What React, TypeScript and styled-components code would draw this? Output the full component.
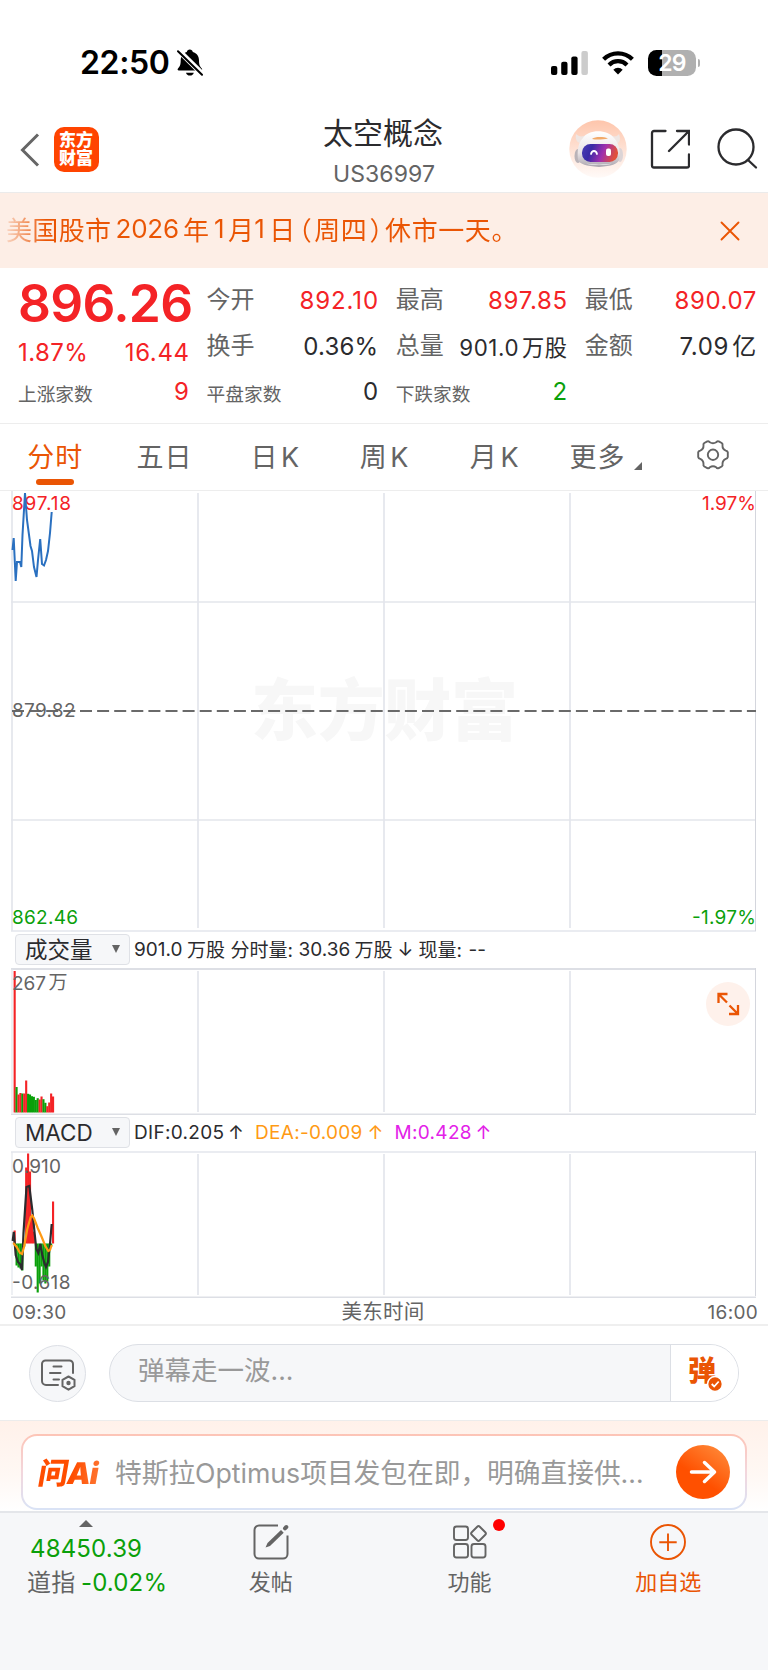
import React from "react";
import styled, { createGlobalStyle, css } from "styled-components";

const RED = "#f42326";
const GREEN = "#0aa00a";
const ORANGE = "#ea5504";
const INK = "#2b2b2e";
const GRAY = "#646464";
const GRID = "#e3e6ec";

const GlobalStyle = createGlobalStyle`
  * { box-sizing: border-box; }
  body {
    margin: 0;
    background: #fff;
    color: ${INK};
    font-family: Inter, "Noto Sans CJK SC", sans-serif;
  }
  svg { display: block; }
`;

const Screen = styled.main`
  width: 768px;
  height: 1670px;
  display: flex;
  flex-direction: column;
  overflow: hidden;
  background: #fff;
  white-space: nowrap;
`;

/* ---------- status bar ---------- */

const StatusBar = styled.header`
  height: 106px;
  flex: none;
  display: flex;
  justify-content: space-between;
  padding: 42px 72px 0 80px;
`;

const Clock = styled.div`
  display: flex;
  align-items: center;
  gap: 7px;
  height: 41px;
  color: #000;
  font-size: 32px;
  font-weight: 600;
  letter-spacing: -0.35px;
`;

const StatusIcons = styled.div`
  display: flex;
  align-items: center;
  height: 41px;
  gap: 14px;
`;

const Battery = styled.div`
  position: relative;
  width: 48px;
  height: 26px;
  border-radius: 8.5px;
  background: linear-gradient(90deg, #000 0 14px, #b0b0b0 14px);
  color: #fff;
  font-size: 23px;
  line-height: 27px;
  font-weight: 600;
  letter-spacing: -0.7px;
  text-align: center;
  &::after {
    content: "";
    position: absolute;
    right: -4px;
    top: 9px;
    width: 2.5px;
    height: 8px;
    border-radius: 0 3px 3px 0;
    background: #b0b0b0;
  }
`;

/* ---------- title bar ---------- */

const TitleBar = styled.div`
  height: 87px;
  flex: none;
  display: grid;
  grid-template-columns: 1fr 160px 1fr;
  border-bottom: 1px solid #ebebeb;
`;

const TitleLeft = styled.div`
  display: flex;
  align-items: center;
  gap: 14px;
  padding: 1px 0 0 19.5px;
`;

const AppLogo = styled.div`
  width: 45px;
  height: 45px;
  margin-top: -1px;
  padding-top: 4px;
  border-radius: 10px;
  background: #ff4400;
  color: #fff;
  font-size: 17px;
  line-height: 18.5px;
  font-weight: 900;
  text-align: center;
`;

const TitleCenter = styled.div`
  text-align: center;
`;

const Title = styled.h1`
  margin: 6px 0 0 -2px;
  height: 43px;
  font-size: 30px;
  line-height: 43px;
  font-weight: 400;
`;

const Code = styled.div`
  margin-top: 3px;
  font-size: 23px;
  line-height: 32px;
  letter-spacing: 0.1px;
  color: ${GRAY};
`;

const TitleRight = styled.div`
  display: flex;
  justify-content: flex-end;
  align-items: center;
  padding: 0 10px 0 0;
`;

/* ---------- notice ---------- */

const Notice = styled.div`
  height: 75px;
  flex: none;
  display: flex;
  align-items: center;
  justify-content: space-between;
  padding: 0 28.5px 0 6px;
  background: #fdeee6;
  color: ${ORANGE};
`;

const NoticeText = styled.div`
  display: flex;
  align-items: center;
  height: 40px;
  margin-top: -4px;
  font-size: 26px;
  letter-spacing: 0.35px;
  background: linear-gradient(90deg, rgba(234, 85, 4, 0.15), ${ORANGE} 40px);
  background-clip: text;
  -webkit-background-clip: text;
  color: transparent;
`;

const Seg = styled.span<{ $w: number; $c?: string; $ls?: number; $half?: boolean }>`
  flex: 0 0 ${(p) => p.$w}px;
  ${(p) => p.$c && css`color: ${p.$c};`}
  ${(p) => p.$ls !== undefined && css`letter-spacing: ${p.$ls}px;`}
  ${(p) => p.$half && css`
    font-feature-settings: "halt";
    text-align: center;
  `}
`;

/* ---------- quote ---------- */

const Quote = styled.section`
  height: 155px;
  flex: none;
  display: flex;
  gap: 17.6px;
  padding: 0 12px 0 18px;
`;

const QuoteCol = styled.div<{ $w: number; $top: number }>`
  flex: 0 0 ${(p) => p.$w}px;
  min-width: 0;
  padding-top: ${(p) => p.$top}px;
`;

const Row = styled.div<{ $h: number }>`
  height: ${(p) => p.$h}px;
  display: flex;
  align-items: center;
  justify-content: space-between;
`;

const Price = styled.div`
  height: 70px;
  font-size: 51.5px;
  line-height: 70px;
  font-weight: 600;
  letter-spacing: -0.7px;
  color: ${RED};
`;

const Label = styled.span<{ $small?: boolean }>`
  color: ${GRAY};
  font-size: ${(p) => (p.$small ? 18.7 : 24)}px;
  margin-top: ${(p) => (p.$small ? 2 : -5)}px;
`;

const Value = styled.span<{ $c?: string; $size?: number; $ls?: number; $up?: number }>`
  color: ${(p) => p.$c || INK};
  font-size: ${(p) => p.$size || 24}px;
  letter-spacing: ${(p) => p.$ls ?? 0.6}px;
  margin-right: -${(p) => p.$ls ?? 0.6}px;
  margin-top: -${(p) => p.$up || 0}px;
  word-spacing: -4px;
`;

/* ---------- tabs ---------- */

const Tabs = styled.nav`
  height: 68px;
  flex: none;
  display: grid;
  grid-template-columns: repeat(7, 1fr);
  border-top: 1px solid #ededed;
  border-bottom: 1px solid #ededed;
`;

const Tab = styled.div<{ $active?: boolean; $left?: number }>`
  position: relative;
  display: flex;
  align-items: center;
  justify-content: center;
  padding: 0 0 4px ${(p) => p.$left || 0}px;
  font-size: 27px;
  letter-spacing: 1px;
  word-spacing: -6px;
  color: ${(p) => (p.$active ? ORANGE : GRAY)};
  ${(p) => p.$active && css`
    &::after {
      content: "";
      position: absolute;
      left: 36px;
      bottom: 5px;
      width: 38px;
      height: 6px;
      border-radius: 3px;
      background: ${ORANGE};
    }
  `}
`;

const Corner = styled.i`
  align-self: flex-end;
  margin: 0 0 16.5px 9px;
  border-left: 8px solid transparent;
  border-bottom: 8px solid ${GRAY};
`;

/* ---------- indicator bars ---------- */

const Indicator = styled.div<{ $h: number }>`
  height: ${(p) => p.$h}px;
  flex: none;
  display: flex;
  align-items: center;
  padding: 0 0 1px 15px;
  font-size: 19px;
`;

const Cjk = styled.span<{ $w: number; $up?: number }>`
  flex: 0 0 ${(p) => p.$w}px;
  margin-top: -${(p) => p.$up ?? 3}px;
`;

const Picker = styled.div`
  flex: 0 0 115px;
  height: 31px;
  margin-right: 4px;
  padding: 0 9.5px 0 9px;
  display: flex;
  align-items: center;
  justify-content: space-between;
  border: 1px solid #dfe1e6;
  border-radius: 4px;
  background: #f6f7f9;
  font-size: 22.5px;
`;

const Caret = styled.i`
  margin-top: -1px;
  border: 4.5px solid transparent;
  border-top: 8px solid ${GRAY};
  border-bottom: 0;
`;

const ChartBox = styled.div`
  position: relative;
  flex: none;
`;

const Expand = styled.button`
  position: absolute;
  right: 18px;
  top: 14px;
  width: 44px;
  height: 44px;
  padding: 0;
  border: 0;
  border-radius: 50%;
  background: #fef1eb;
`;

const TimeAxis = styled.div`
  height: 28px;
  flex: none;
  display: grid;
  grid-template-columns: 1fr auto 1fr;
  align-items: center;
  padding: 3px 10px 0 12px;
  border-bottom: 2px solid #efefef;
  color: ${GRAY};
  font-size: 19px;
  line-height: 24px;
  letter-spacing: 0.3px;
  & > :nth-child(2) { font-size: 20.5px; margin: -2px 2px 0 -2px; }
  & > :last-child { text-align: right; }
`;

/* ---------- comment bar ---------- */

const CommentBar = styled.div`
  height: 94px;
  flex: none;
  display: flex;
  align-items: center;
  gap: 23px;
  padding: 0 29px;
`;

const RoundButton = styled.div`
  width: 57px;
  height: 57px;
  border: 1px solid #dcdfe5;
  border-radius: 50%;
  background: #f6f7f9;
`;

const CommentInput = styled.div`
  flex: 1;
  height: 58px;
  display: flex;
  overflow: hidden;
  border: 1px solid #dcdfe5;
  border-radius: 29px;
  background: #f6f7f9;
`;

const Placeholder = styled.div`
  flex: 1;
  padding-left: 28px;
  font-size: 26.5px;
  line-height: 50px;
  color: #999;
`;

const DanToggle = styled.div`
  position: relative;
  width: 68px;
  padding: 0 0 0 17px;
  border-left: 1px solid #dcdfe5;
  background: #fff;
  color: ${ORANGE};
  font-size: 28px;
  line-height: 53px;
  font-weight: 900;
  & > svg { position: absolute; left: 36px; top: 31px; }
`;

/* ---------- AI bar ---------- */

const AiBar = styled.div`
  height: 91px;
  flex: none;
  padding: 13px 21px 0;
  border-top: 1px solid #ececec;
  background: linear-gradient(#fff1ea, #fff8f4 60%, #fff);
`;

const AiCard = styled.div`
  height: 76px;
  display: flex;
  align-items: center;
  padding: 0 15px 0 15px;
  border: 2px solid transparent;
  border-radius: 16px;
  background:
    linear-gradient(#fff, #fff) padding-box,
    linear-gradient(#fdc4b6, #f3d6dc 50%, #d9e3f6) border-box;
`;

const AiLogo = styled.div`
  width: 77px;
  margin-top: -3px;
  padding-left: 1px;
  font-size: 30px;
  font-weight: 900;
  letter-spacing: -1.1px;
  transform: skewX(-10deg);
  background: linear-gradient(90deg, #ff4d00 45%, #ff8a4a);
  background-clip: text;
  -webkit-background-clip: text;
  color: transparent;
`;

const AiText = styled.div`
  flex: 1;
  margin-top: -2px;
  color: #999;
  font-size: 26.75px;
  letter-spacing: -0.05px;
`;

const Go = styled.div`
  width: 54px;
  height: 54px;
  border-radius: 50%;
  background: linear-gradient(35deg, #ff5000 40%, #ff9140);
`;

/* ---------- bottom navigation ---------- */

const BottomNav = styled.footer`
  flex: 1;
  display: flex;
  border-top: 2px solid #e4e6ea;
  background: #f6f7f9;
`;

const IndexCell = styled.div`
  width: 172px;
  padding: 7px 0 0 27px;
  font-size: 24px;
`;

const UpMark = styled.i`
  display: block;
  width: 0;
  margin-left: 52px;
  border: 7px solid transparent;
  border-bottom: 7px solid ${GRAY};
  border-top: 0;
`;

const IndexLine = styled.div<{ $h: number; $c: string; $left?: number }>`
  display: flex;
  align-items: center;
  height: ${(p) => p.$h}px;
  padding-left: ${(p) => p.$left || 0}px;
  color: ${(p) => p.$c};
  letter-spacing: 0.15px;
`;

const NavItem = styled.div<{ $active?: boolean }>`
  position: relative;
  flex: 1;
  display: flex;
  flex-direction: column;
  align-items: center;
  padding: 10.5px 1px 0 0;
  font-size: 22px;
  line-height: 32px;
  color: ${(p) => (p.$active ? ORANGE : GRAY)};
  & > svg { margin-bottom: 6px; }
`;

const Dot = styled.i`
  position: absolute;
  left: 122px;
  top: 6px;
  width: 12px;
  height: 12px;
  border-radius: 50%;
  background: #f00;
`;

/* ---------- charts ---------- */

const COLS = [198, 384, 570];

const Txt = (p: { x: number; y: number; w: number; c: string; end?: boolean; children: string }) => (
  <text
    x={p.x}
    y={p.y}
    fill={p.c}
    fontSize={19}
    textAnchor={p.end ? "end" : "start"}
    textLength={p.w}
    lengthAdjust="spacing"
  >
    {p.children}
  </text>
);

const pts = (a: number[][]) => a.map((p) => p.join(",")).join(" ");

const priceLine = [
  [12.5, 59], [13.7, 47], [15.7, 90], [17, 71], [20, 71], [21.3, 76], [22.5, 44], [25, 2], [27, 29],
  [30.5, 55], [32, 60], [34, 76], [36.5, 86], [38, 69], [40.2, 48], [42, 73], [44, 74.5], [46, 69],
  [48, 60], [50, 42], [51.7, 21],
];

const PriceChart = () => (
  <svg width="768" height="441" viewBox="0 0 768 441">
    <text x="251" y="244" fontSize="67" fontWeight="900" fill="#f7f7f7" textLength="267" lengthAdjust="spacing">
      东方财富
    </text>
    <g stroke={GRID} strokeWidth="1.7">
      <path d="M12 0V440M11 111H756M11 329H756" />
      {COLS.map((x) => <path key={x} d={`M${x} 2V437`} />)}
      <path d="M11 440H756" strokeWidth="1.500" />
    </g>
    <path d="M755.500 0V440" stroke="#d4d6dd" />
    <path d="M80 220H756" stroke="#6a6a6a" strokeWidth="2" strokeDasharray="12 5.1" />
    <path d="M12 220H76" stroke="#6a6a6a" strokeWidth="2" strokeDasharray="12 5.1" />
    <Txt x={12} y={19} w={59} c={RED}>897.18</Txt>
    <Txt x={756} y={19} w={54} c={RED} end>1.97%</Txt>
    <Txt x={12} y={226} w={63.500} c={GRAY}>879.82</Txt>
    <Txt x={12} y={432.500} w={66} c={GREEN}>862.46</Txt>
    <Txt x={756} y={432.500} w={64} c={GREEN} end>-1.97%</Txt>
    <polyline points={pts(priceLine)} fill="none" stroke="#2a70c0" strokeWidth="2" />
  </svg>
);

const BAR = 1.92;

/* [height, isUp] for each minute */
const volume: [number, boolean][] = [
  [141.5, true], [25.5, false], [18, true], [19.5, true], [19, false], [19, true], [32, true],
  [18.7, false], [18, false], [16.3, false], [15.7, false], [12.5, false], [14.3, false], [13, true],
  [16, true], [13.3, false], [9.7, false], [6.3, true], [10, true], [19, true], [16, true],
];

const VolumeChart = () => (
  <svg width="768" height="147" viewBox="0 0 768 147">
    <path d="M11 1H756M11 146.500H756" stroke="#dddfe5" strokeWidth="1.8" />
    <path d="M12 1V145" stroke={GRID} strokeWidth="1.2" />
    {COLS.map((x) => <path key={x} d={`M${x} 3V144`} stroke={GRID} strokeWidth="1.7" />)}
    <path d="M755.500 0V145" stroke="#d4d6dd" />
    {volume.map(([h, up], i) => (
      <rect key={i} x={13.6 + i * BAR} y={144.5 - h} width={BAR + 0.2} height={h} fill={up ? RED : GREEN} />
    ))}
    <Txt x={12} y={21.500} w={34} c={GRAY}>267</Txt>
    <Txt x={48.500} y={21} w={19} c={GRAY}>万</Txt>
  </svg>
);

const macd = [
  13, -22, -24, -25, -27, -3, 76, 90, 72, 28, 12, -23, -49, -40, -23, -37, -40, -38, -23, -3, 42,
];

const dif = [
  [12.7, 90], [13.8, 81], [15.7, 104], [18, 111], [20, 113], [22, 119], [23.5, 82], [26.5, 36],
  [29.3, 35], [32.3, 59], [34.7, 83], [36.3, 98], [38.3, 102], [40.3, 93], [42.3, 104], [44.3, 112],
  [46, 116], [48, 111], [50, 93], [51.7, 73],
];

const dea = [
  [13.3, 92], [16.7, 96], [20, 102], [22, 103], [24, 96], [27.3, 78], [30.7, 66], [32.3, 64.5],
  [34.3, 68], [37.7, 77], [41.7, 86], [45.3, 95], [48.3, 100], [50, 99], [51.7, 94],
];

const MacdChart = () => (
  <svg width="768" height="147" viewBox="0 0 768 147">
    <path d="M11 1H756" stroke={GRID} strokeWidth="1.500" />
    <path d="M11 147H756" stroke="#dddfe5" strokeWidth="3" />
    <path d="M12 1V144" stroke={GRID} strokeWidth="1.2" />
    {COLS.map((x) => <path key={x} d={`M${x} 3V144`} stroke={GRID} strokeWidth="1.7" />)}
    <path d="M755.500 0V145" stroke="#d4d6dd" />
    {macd.map((v, i) => (
      <rect
        key={i}
        x={13.6 + i * BAR}
        y={v > 0 ? 92.5 - v : 92.5}
        width={BAR + 0.2}
        height={Math.abs(v)}
        fill={v > 0 ? RED : GREEN}
      />
    ))}
    <Txt x={12} y={21.500} w={49} c={GRAY}>0.910</Txt>
    <Txt x={12} y={138} w={58.500} c={GRAY}>-0.618</Txt>
    <polyline points={pts(dif)} fill="none" stroke="#2b2b2e" strokeWidth="2.2" />
    <polyline points={pts(dea)} fill="none" stroke="#ff9a14" strokeWidth="2.2" />
  </svg>
);

/* ---------- icons ---------- */

const BellOff = () => (
  <svg width="26" height="28" viewBox="0 0 26 28">
    <path d="M12.8 .5c1.6 0 2.8 1 3 2.4 4 1.2 6.200 4.200 6.200 8.600 0 4.500 1 6 2.800 8 .7.8.4 2-.8 2H1.800c-1.200 0-1.600-1.200-.8-2 1.800-2 2.700-3.500 2.700-8 0-4.400 2.200-7.400 6.100-8.600.2-1.400 1.400-2.400 3-2.400z" fill="#000" />
    <path d="M9 23.800h7.800a4 3.600 0 0 1-7.800 0z" fill="#000" />
    <path d="M1.200 1.200L26 25.500" stroke="#fff" strokeWidth="5.500" />
    <path d="M1 2.200L25 25.800" stroke="#000" strokeWidth="2" strokeLinecap="round" />
  </svg>
);

const Signal = () => (
  <svg width="37" height="24" viewBox="0 0 37 24">
    <rect x="0" y="15" width="6.300" height="9" rx="2" />
    <rect x="10.200" y="10.800" width="6.300" height="13.200" rx="2" />
    <rect x="20.300" y="5.600" width="6.300" height="18.400" rx="2" />
    <rect x="30.400" y="0" width="6.500" height="24" rx="2" fill="#ccc" />
  </svg>
);

const Wifi = () => (
  <svg width="32" height="24" viewBox="0 0 32 24" fill="none" stroke="#000" strokeWidth="4.200">
    <path d="M1.600 8.300a20.500 20.500 0 0 1 28.800 0" />
    <path d="M7 13.900a12.800 12.800 0 0 1 18 0" />
    <path d="M16 23.500l-4.700-4.700a6.700 6.700 0 0 1 9.400 0z" fill="#000" stroke="none" />
  </svg>
);

const Back = () => (
  <svg width="20" height="34" viewBox="0 0 20 34" fill="none" stroke="#666" strokeWidth="3">
    <path d="M18 1.500L2.500 17 18 32.500" />
  </svg>
);

const Robot = () => (
  <svg width="58" height="58" viewBox="0 0 58 58">
    <defs>
      <linearGradient id="halo" x1="0" y1="0" x2="0" y2="1">
        <stop offset="0" stopColor="#fec5ab" />
        <stop offset=".55" stopColor="#fee4d8" />
        <stop offset="1" stopColor="#fffaf8" />
      </linearGradient>
      <linearGradient id="visor" x1="0" y1="0" x2="1" y2=".2">
        <stop offset="0" stopColor="#4a3fb4" />
        <stop offset=".3" stopColor="#3a2ba6" />
        <stop offset=".65" stopColor="#a02fae" />
        <stop offset="1" stopColor="#e0503c" />
      </linearGradient>
      <linearGradient id="shell" x1="0" y1="0" x2="0" y2="1">
        <stop offset="0" stopColor="#fff" />
        <stop offset=".6" stopColor="#e9e4e6" />
        <stop offset="1" stopColor="#aaa5ae" />
      </linearGradient>
    </defs>
    <circle cx="29" cy="29" r="28.700" fill="url(#halo)" />
    <ellipse cx="9" cy="36" rx="3.500" ry="7" fill="#b9b3b8" />
    <ellipse cx="51" cy="35" rx="3" ry="7" fill="#dcd4d6" />
    <path d="M7 14c-1 6 1 9 7 10l4-9c-5 2-8 2-11-1zM50 14c2 6 1 9-4 10l-6-9c5 2 8 2 10-1z" fill="#efe6e3" />
    <path d="M14 18c5-9 25-9 31 0 5 5 7 14 5 22-2 4-7 6-20 7-13-1-19-3-21-7-1-9 0-17 5-22z" fill="url(#shell)" />
    <path d="M23 19c3-2.500 11-2.500 16-.5-5 1-11 1.500-16 .5z" fill="#f2a968" />
    <rect x="13" y="24" width="36" height="18" rx="8.500" fill="url(#visor)" />
    <path d="M22 34c1-4 5-4 6 0" fill="none" stroke="#fff" strokeWidth="1.800" strokeLinecap="round" />
    <rect x="37" y="28.500" width="5" height="7.500" rx="2" fill="#fff" />
    <path d="M17 43.500c8 1.500 18 1.500 26 0-6 2-20 2-26 0z" fill="#fff" />
  </svg>
);

const ShareIcon = styled.svg`
  margin-left: 23px;
`;

const SearchIcon = styled.svg`
  margin-left: 26px;
`;

const Share = () => (
  <ShareIcon width="40" height="40" viewBox="0 0 40 40" fill="none" stroke="#2b2b2e" strokeWidth="2.300" strokeLinecap="round">
    <path d="M15.500 2H4a2 2 0 0 0-2 2v32.500a2 2 0 0 0 2 2h33a2 2 0 0 0 2-2V25.500" />
    <path d="M27 2h12v13.500M38.500 2.500L19 22" />
  </ShareIcon>
);

const Search = () => (
  <SearchIcon width="42" height="42" viewBox="0 0 42 42" fill="none" stroke="#2b2b2e" strokeWidth="2.300" strokeLinecap="round">
    <circle cx="20" cy="19" r="17.500" />
    <path d="M32 32l8 7.500" />
  </SearchIcon>
);

const Close = () => (
  <svg width="20" height="20" viewBox="0 0 20 20" fill="none" stroke={ORANGE} strokeWidth="1.900" strokeLinecap="round">
    <path d="M1.500 1.500l17 17M18.500 1.500l-17 17" />
  </svg>
);

const Gear = () => (
  <svg width="32" height="32" viewBox="0 0 32 32" fill="none" stroke={GRAY} strokeWidth="1.900" strokeLinejoin="round">
    <path d="M10.300 2.300Q12 1.800 12.800 3.200Q16 5.200 19.200 3.200Q20 1.800 21.700 2.300L24.700 4Q26 5 25.500 6.500Q25.400 10.300 28.800 11.600Q30.500 12 30.800 13.300V18Q30.500 19.400 28.800 19.800Q25.400 21.300 25.500 25Q26 26.500 24.700 27.500L21.700 29.200Q20 29.700 19.200 28.300Q16 26.300 12.800 28.300Q12 29.700 10.300 29.200L7.300 27.500Q6 26.500 6.500 25Q6.600 21.300 3.200 19.800Q1.500 19.400 1.200 18V13.300Q1.500 12 3.200 11.600Q6.600 10.300 6.500 6.500Q6 5 7.300 4Z" />
    <circle cx="16" cy="15.750" r="5.200" />
  </svg>
);

const ExpandIcon = () => (
  <svg width="44" height="44" viewBox="0 0 44 44" fill="none" stroke={ORANGE} strokeWidth="2.300">
    <path d="M12.500 21v-9h9M13 12.500l8 8M32 23v9h-9M31.500 31.500l-8-8" />
  </svg>
);

const PostSettings = () => (
  <svg width="55" height="55" viewBox="0 0 55 55" fill="none" stroke={GRAY} strokeWidth="2" strokeLinecap="round">
    <path d="M43 27V18a3.500 3.500 0 0 0-3.500-3.500h-24A3.500 3.500 0 0 0 12 18v17a4 4 0 0 0 4 4h12" />
    <path d="M23.500 20.500h8M20 27h10.500M23.500 33.500h5.500" />
    <path d="M38.500 30.500l6 3.300v6.400l-6 3.500-6-3.500v-6.400z" strokeLinejoin="round" />
    <circle cx="38.500" cy="37" r="1.200" fill={GRAY} />
  </svg>
);

const CheckBadge = () => (
  <svg width="16" height="16" viewBox="0 0 16 16" overflow="visible">
    <circle cx="8" cy="8" r="7.400" fill={ORANGE} stroke="#fff" strokeWidth="1.500" />
    <path d="M4.700 8l2.500 2.500 4.500-5" fill="none" stroke="#fff" strokeWidth="1.800" />
  </svg>
);

const GoArrow = () => (
  <svg width="54" height="54" viewBox="0 0 54 54" fill="none" stroke="#fff" strokeWidth="3.500" strokeLinecap="round" strokeLinejoin="round">
    <path d="M15.500 27h23M28.500 17.500L38.500 27l-10 9.500" />
  </svg>
);

const Compose = () => (
  <svg width="36" height="36" viewBox="0 0 36 36" fill="none" stroke={GRAY} strokeWidth="2">
    <path d="M25 1.500H6A4.500 4.500 0 0 0 1.500 6v24A4.500 4.500 0 0 0 6 34.500h24a4.500 4.500 0 0 0 4.500-4.500V11.500" />
    <path d="M12.500 23.500l2-4.500L28 6l2.700 2.700L17 22z" fill={GRAY} stroke="none" />
    <path d="M32 4.300l1.300-1.300" strokeWidth="4" strokeLinecap="round" />
  </svg>
);

const Apps = () => (
  <svg width="36" height="36" viewBox="0 0 36 36" fill="none" stroke={GRAY} strokeWidth="1.900">
    <rect x="2" y="2.500" width="14" height="13.500" rx="2.500" />
    <rect x="2" y="20" width="14" height="13.500" rx="2.500" />
    <rect x="19.500" y="20" width="14" height="13.500" rx="2.500" />
    <rect x="20.800" y="3.800" width="11.400" height="11.400" rx="1.800" transform="rotate(45 26.500 9.500)" />
  </svg>
);

const Add = () => (
  <svg width="36" height="36" viewBox="0 0 36 36" fill="none" stroke={ORANGE} strokeWidth="1.900">
    <circle cx="18" cy="18" r="17" />
    <path d="M18 9.500v17.500M9.300 18.200h17.400" />
  </svg>
);

export default function App() {
  return (
    <Screen>
      <GlobalStyle />
      <StatusBar>
        <Clock>22:50<BellOff /></Clock>
        <StatusIcons>
          <Signal />
          <Wifi />
          <Battery>29</Battery>
        </StatusIcons>
      </StatusBar>

      <TitleBar>
        <TitleLeft>
          <Back />
          <AppLogo>东方<br />财富</AppLogo>
        </TitleLeft>
        <TitleCenter>
          <Title>太空概念</Title>
          <Code>US36997</Code>
        </TitleCenter>
        <TitleRight>
          <Robot />
          <Share />
          <Search />
        </TitleRight>
      </TitleBar>

      <Notice>
        <NoticeText>
          <Seg $w={109.5}>美国股市</Seg>
          <Seg $w={67.5} $ls={-0.2}>2026</Seg>
          <Seg $w={31}>年</Seg>
          <Seg $w={14}>1</Seg>
          <Seg $w={26}>月</Seg>
          <Seg $w={15}>1</Seg>
          <Seg $w={27}>日</Seg>
          <Seg $w={18} $half>（</Seg>
          <Seg $w={52.5}>周四</Seg>
          <Seg $w={18} $half>）</Seg>
          <Seg $w={140} $ls={0.6}>休市一天。</Seg>
        </NoticeText>
        <Close />
      </Notice>

      <Quote>
        <QuoteCol $w={171} $top={0}>
          <Price>896.26</Price>
          <Row $h={29}><Value $c={RED} $ls={0.4}>1.87%</Value><Value $c={RED}>16.44</Value></Row>
          <Row $h={48}><Label $small>上涨家数</Label><Value $c={RED}>9</Value></Row>
        </QuoteCol>
        <QuoteCol $w={171.5} $top={9}>
          <Row $h={46}><Label>今开</Label><Value $c={RED} $ls={0.9}>892.10</Value></Row>
          <Row $h={46}><Label>换手</Label><Value $ls={0.2}>0.36%</Value></Row>
          <Row $h={45}><Label $small>平盘家数</Label><Value>0</Value></Row>
        </QuoteCol>
        <QuoteCol $w={171.5} $top={9}>
          <Row $h={46}><Label>最高</Label><Value $c={RED} $ls={0.7}>897.85</Value></Row>
          <Row $h={46}><Label>总量</Label><Value $size={22.3} $up={1}>901.0 万股</Value></Row>
          <Row $h={45}><Label $small>下跌家数</Label><Value $c={GREEN}>2</Value></Row>
        </QuoteCol>
        <QuoteCol $w={171.5} $top={9}>
          <Row $h={46}><Label>最低</Label><Value $c={RED}>890.07</Value></Row>
          <Row $h={46}><Label>金额</Label><Value $up={3}>7.09 亿</Value></Row>
        </QuoteCol>
      </Quote>

      <Tabs>
        <Tab $active $left={1}>分时</Tab>
        <Tab>五日</Tab>
        <Tab $left={2}>日 K</Tab>
        <Tab $left={1}>周 K</Tab>
        <Tab $left={2}>月 K</Tab>
        <Tab $left={5}>更多<Corner /></Tab>
        <Tab><Gear /></Tab>
      </Tabs>

      <PriceChart />

      <Indicator $h={36}>
        <Picker><Cjk $w={70} $up={3}>成交量</Cjk><Caret /></Picker>
        <Seg $w={53}>901.0</Seg>
        <Cjk $w={43.5}>万股</Cjk>
        <Cjk $w={68}>分时量:</Cjk>
        <Seg $w={56}>30.36</Seg>
        <Cjk $w={43}>万股</Cjk>
        <Seg $w={21}>↓</Seg>
        <Cjk $w={50}>现量:</Cjk>
        <Seg $w={30}>--</Seg>
      </Indicator>
      <ChartBox>
        <VolumeChart />
        <Expand><ExpandIcon /></Expand>
      </ChartBox>

      <Indicator $h={36}>
        <Picker>MACD<Caret /></Picker>
        <Seg $w={94} $ls={0.3}>DIF:0.205</Seg>
        <Seg $w={27}>↑</Seg>
        <Seg $w={112.5} $c="#ff9a14" $ls={0.3}>DEA:-0.009</Seg>
        <Seg $w={27} $c="#ff9a14">↑</Seg>
        <Seg $w={81} $c="#e321e8" $ls={0.3}>M:0.428</Seg>
        <Seg $w={26} $c="#e321e8">↑</Seg>
      </Indicator>
      <MacdChart />

      <TimeAxis>
        <span>09:30</span>
        <span>美东时间</span>
        <span>16:00</span>
      </TimeAxis>

      <CommentBar>
        <RoundButton><PostSettings /></RoundButton>
        <CommentInput>
          <Placeholder>弹幕走一波...</Placeholder>
          <DanToggle>弹<CheckBadge /></DanToggle>
        </CommentInput>
      </CommentBar>

      <AiBar>
        <AiCard>
          <AiLogo>问Ai</AiLogo>
          <AiText>特斯拉Optimus项目发包在即，明确直接供…</AiText>
          <Go><GoArrow /></Go>
        </AiCard>
      </AiBar>

      <BottomNav>
        <IndexCell>
          <UpMark />
          <IndexLine $h={43} $c={GREEN} $left={3}>48450.39</IndexLine>
          <IndexLine $h={24} $c={GREEN}><Cjk $w={54} $up={3}><Seg $w={54} $c={GRAY}>道指</Seg></Cjk>-0.02%</IndexLine>
        </IndexCell>
        <NavItem><Compose />发帖</NavItem>
        <NavItem><Apps />功能<Dot /></NavItem>
        <NavItem $active><Add />加自选</NavItem>
      </BottomNav>
    </Screen>
  );
}
